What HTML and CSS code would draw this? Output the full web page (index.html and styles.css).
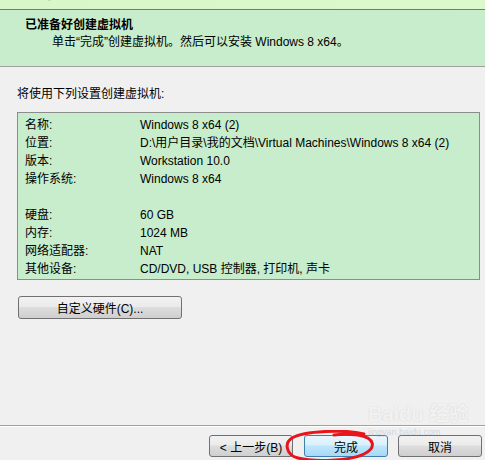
FILE: index.html
```html
<!DOCTYPE html>
<html lang="zh-CN">
  <head>
    <meta charset="UTF-8" />
    <title>新建虚拟机向导</title>
    <link rel="stylesheet" href="styles.css">
  </head>
  <body>
    <div class="page">
      <div class="title-strip">
        <span class="title-cut">新建虚拟机向导</span>
      </div>

      <div class="header">
        <div class="header-title">已准备好创建虚拟机</div>
        <div class="header-sub">单击“完成”创建虚拟机。然后可以安装 Windows 8 x64。</div>
      </div>

      <div class="content">
        <p class="intro">将使用下列设置创建虚拟机:</p>

        <div class="summary">
          <span>名称:</span><span>Windows 8 x64 (2)</span>
          <span>位置:</span><span>D:\用户目录\我的文档\Virtual Machines\Windows 8 x64 (2)</span>
          <span>版本:</span><span>Workstation 10.0</span>
          <span>操作系统:</span><span>Windows 8 x64</span>
          <span class="blank"></span><span class="blank"></span>
          <span>硬盘:</span><span>60 GB</span>
          <span>内存:</span><span>1024 MB</span>
          <span>网络适配器:</span><span>NAT</span>
          <span>其他设备:</span><span>CD/DVD, USB 控制器, 打印机, 声卡</span>
        </div>

        <button class="btn btn-wide">自定义硬件(C)...</button>
      </div>

      <div class="footer">
        <button class="btn">&lt; 上一步(B)</button>
        <button class="btn btn-default">完成</button>
        <button class="btn">取消</button>
      </div>

      <div class="watermark">
        <span class="wm-logo">Baidu 经验</span>
        <span class="wm-url">jingyan.baidu.com</span>
      </div>

      <svg class="circle" width="96" height="32" viewBox="0 0 96 32">
        <path d="M80 4 C60 -1 20 1 8 8 C0 13 2 25 14 28 C30 32 66 31 80 24 C92 18 92 8 74 5 C66 4 56 4 50 5"
              fill="none" stroke="#e8141b" stroke-width="3" stroke-linecap="round" />
      </svg>
    </div>
  </body>
</html>
```

FILE: styles.css
```css
* {
  margin: 0;
  padding: 0;
  box-sizing: border-box;
}

body {
  background-color: #f0f0f0;
  font-family: "Liberation Sans", "Noto Sans CJK SC", sans-serif;
  font-size: 12px;
  color: #000;
}

.page {
  position: relative;
  height: 460px;
  display: flex;
  flex-direction: column;
  overflow: hidden;
}

.title-strip {
  height: 10px;
  background: linear-gradient(to right, #d9f6c9, #dcf9cc);
  border-bottom: 1px solid #6e7f6e;
  overflow: hidden;
}

.title-cut {
  display: block;
  margin-top: -13px;
  margin-left: -2px;
  font-size: 12px;
  line-height: 16px;
  font-weight: bold;
  color: #2a3550;
}

.header {
  height: 57px;
  background-color: #c7edcc;
  border-bottom: 1px solid #a0a0a0;
  padding-top: 7px;
}

.header-title {
  line-height: 17px;
  padding-left: 25px;
  font-weight: bold;
}

.header-sub {
  line-height: 17px;
  padding-left: 52px;
}

.content {
  padding: 18px 5px 0 17px;
}

.intro {
  line-height: 18px;
}

.summary {
  margin-top: 9px;
  width: 463px;
  background-color: #c7edcc;
  border: 1px solid #8c8c8c;
  padding: 3px 0 1px 7px;
  display: grid;
  grid-template-columns: 115px 1fr;
  line-height: 18px;
  white-space: nowrap;
}

.blank {
  height: 18px;
}

.btn {
  font-family: "Liberation Sans", "Noto Sans CJK SC", sans-serif;
  font-size: 12px;
  color: #000;
  width: 84px;
  height: 22px;
  border: 1px solid #707070;
  border-radius: 3px;
  background: linear-gradient(to bottom, #f2f2f2 0%, #ebebeb 45%, #dddddd 50%, #cfcfcf 100%);
}

.btn-wide {
  margin-top: 16px;
  margin-left: 1px;
  width: 164px;
  height: 23px;
}

.btn-default {
  border-color: #3c7fb1;
  background: linear-gradient(to bottom, #eaf6fd 0%, #d9f0fc 45%, #bee6fd 50%, #a7d9f5 100%);
}

.footer {
  margin-top: auto;
  border-top: 1px solid #a0a0a0;
  box-shadow: inset 0 1px 0 #ffffff;
  padding: 9px 3px 3px 0;
  display: flex;
  justify-content: flex-end;
  gap: 10px;
}

.footer .btn:first-child {
  margin-right: 1px;
}

.watermark {
  position: absolute;
  left: 368px;
  top: 403px;
  display: flex;
  flex-direction: column;
  pointer-events: none;
}

.wm-logo {
  font-size: 20px;
  font-weight: bold;
  color: rgba(255, 255, 255, 0.75);
  text-shadow: 0 0 1px rgba(160, 160, 160, 0.5);
  line-height: 22px;
}

.wm-url {
  margin-top: 2px;
  font-size: 9px;
  line-height: 10px;
  color: rgba(160, 180, 200, 0.45);
}

.circle {
  position: absolute;
  left: 284px;
  top: 430px;
}
```
